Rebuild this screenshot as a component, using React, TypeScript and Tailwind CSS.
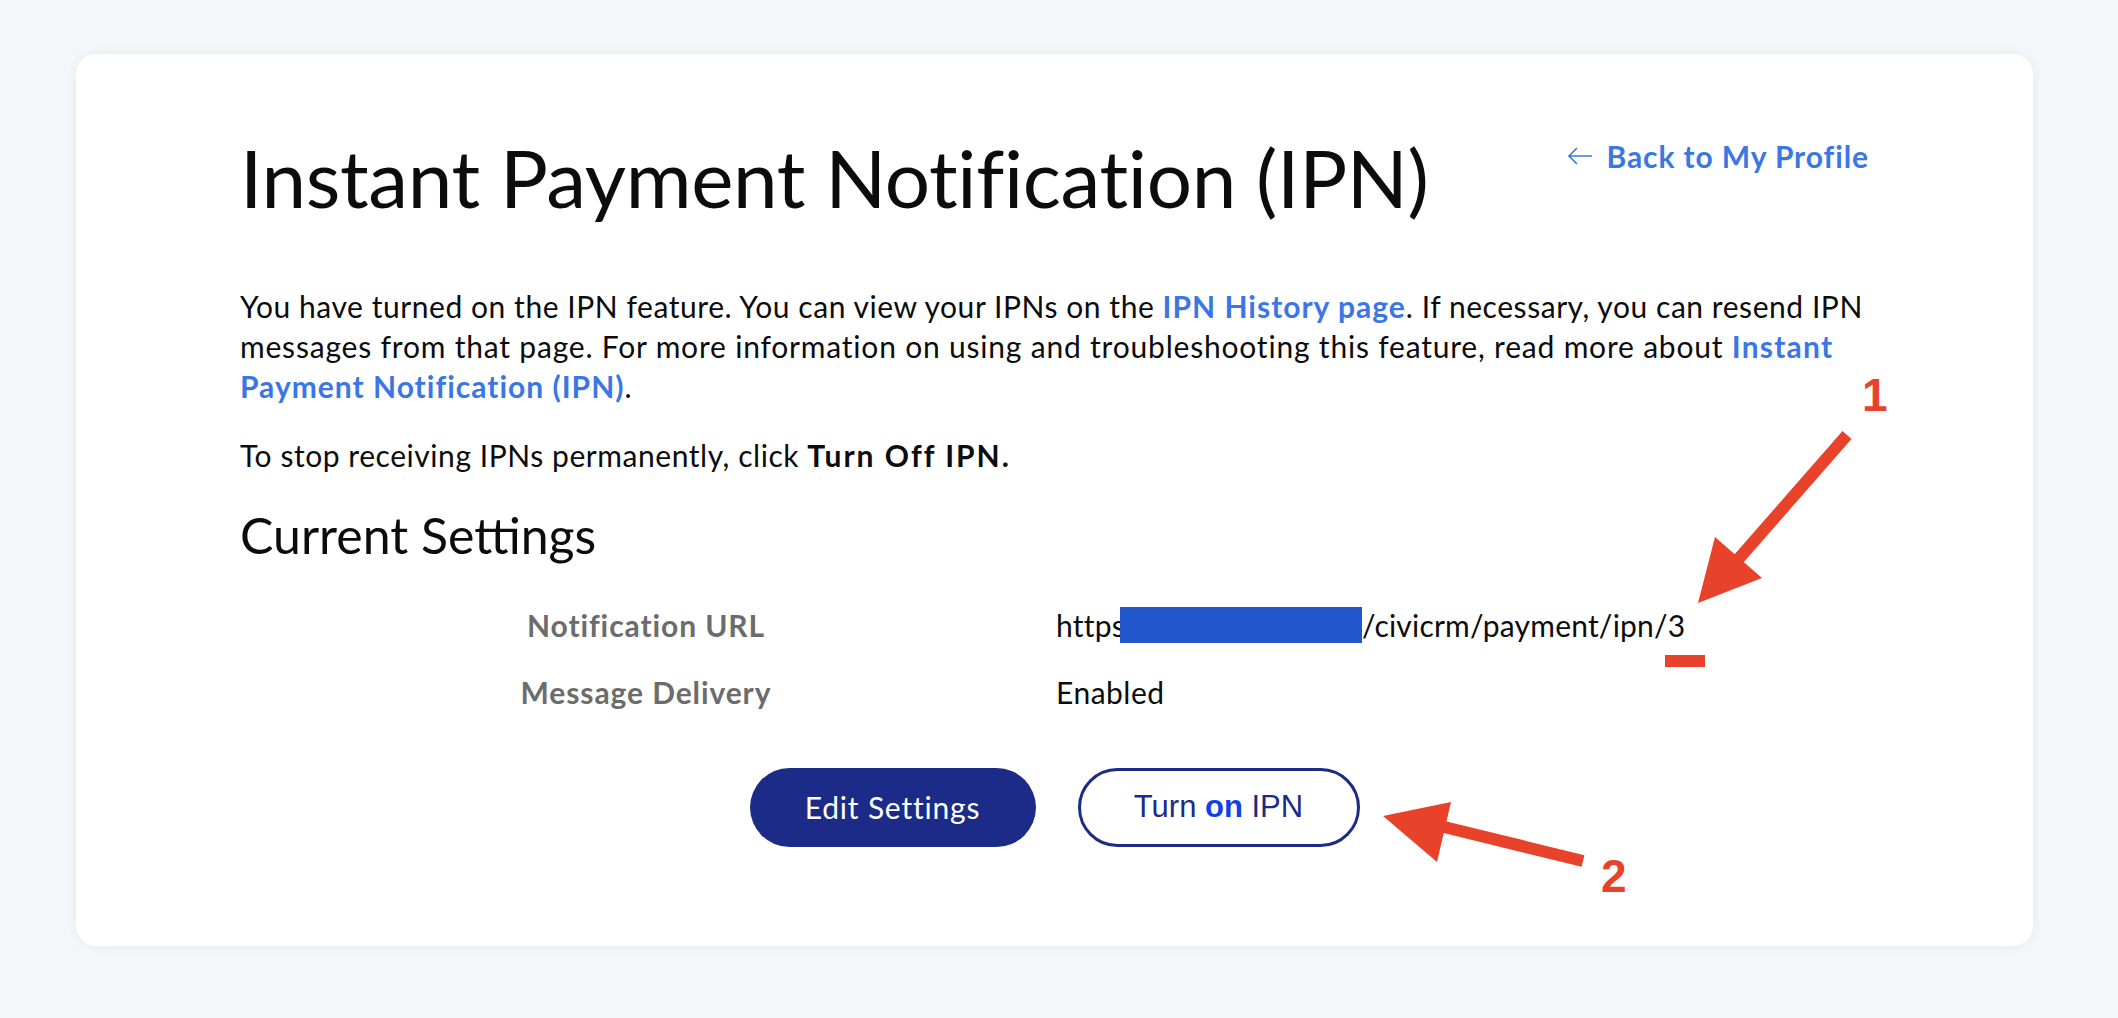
import React from "react";

const font = { fontFamily: "Lato, 'Noto Sans', sans-serif" };
const arial = { fontFamily: "'Liberation Sans', Arial, sans-serif" };

function Annotations() {
  return (
    <svg
      className="absolute left-0 top-0 pointer-events-none"
      width="2118"
      height="1018"
      viewBox="0 0 2118 1018"
    >
      <line x1="1847" y1="435" x2="1735" y2="563" stroke="#e8432a" strokeWidth="12" />
      <polygon points="1698,603 1715,537 1762,578" fill="#e8432a" />
      <line x1="1583" y1="861" x2="1440" y2="826" stroke="#e8432a" strokeWidth="12" />
      <polygon points="1383,816 1451,802 1437,862" fill="#e8432a" />
      <rect x="1665" y="655" width="40" height="12" fill="#e8432a" />
    </svg>
  );
}

export default function App() {
  return (
    <div className="relative min-h-[1018px] w-full bg-[#f5f6fa] pt-[54px] pl-[76px] pr-[85px] pb-[72px]" style={font}>
      <div className="bg-white rounded-[20px] shadow-[0_0_12px_rgba(0,0,0,0.06)] h-[892px] px-[164px] pt-[75px]">
        <div className="flex justify-between items-start">
          <h1 className="text-[80px] leading-[96px] text-[#0c0c0d] font-normal tracking-[-0.35px]">
            Instant Payment Notification (IPN)
          </h1>
          <a className="flex items-center gap-[14px] mt-[7px] text-[#3b77e4] font-bold text-[30px] leading-[40px] tracking-[0.9px]">
            <svg width="26" height="20" viewBox="0 0 26 20" fill="none" stroke="#3b77e4" strokeWidth="1.6">
              <path d="M25 10H2M10 2L2 10L10 18" />
            </svg>
            Back to My Profile
          </a>
        </div>
        <div className="mt-[61px] text-[30px] leading-[40px] text-[#0c0c0d] tracking-[0.55px]">
          <p>
            You have turned on the IPN feature. You can view your IPNs on the{" "}
            <span className="text-[#3b77e4] font-bold tracking-[1px]">IPN History page</span>. If necessary, you can resend IPN
            <br />
            <span className="tracking-[0.8px]">
              messages from that page. For more information on using and troubleshooting this feature, read more about{" "}
            </span>
            <span className="text-[#3b77e4] font-bold tracking-[1.2px]">Instant</span>
            <br />
            <span className="text-[#3b77e4] font-bold tracking-[1px]">Payment Notification (IPN)</span>.
          </p>
          <p className="mt-[29px]">
            To stop receiving IPNs permanently, click <span className="font-bold tracking-[2px]">Turn Off IPN.</span>
          </p>
        </div>
        <h2 className="mt-[30px] text-[50px] leading-[60px] text-[#0c0c0d] font-normal">Current Settings</h2>
        <div className="mt-[26px] text-[30px] leading-[40px]">
          <div className="flex h-[67px] items-center">
            <div className="w-[452px] ml-[180px] text-center font-bold text-[#6c6c6c] tracking-[0.9px]">Notification URL</div>
            <div className="ml-[184px] flex items-center text-[#0c0c0d] tracking-[0.2px]">
              <span className="w-[64px] whitespace-nowrap">https</span>
              <span className="relative inline-block w-[242px] h-[36px] bg-[#2457cd] mt-[1px]" />
              <span>/civicrm/payment/ipn/3</span>
            </div>
          </div>
          <div className="flex h-[67px] items-center">
            <div className="w-[452px] ml-[180px] text-center font-bold text-[#6c6c6c] tracking-[0.9px]">Message Delivery</div>
            <div className="ml-[184px] text-[#0c0c0d] tracking-[0.5px]">Enabled</div>
          </div>
        </div>
        <div className="mt-[43px] flex justify-center gap-[42px]">
          <button className="w-[286px] h-[79px] rounded-full bg-[#1c2b87] text-white text-[30px] tracking-[0.8px]">
            Edit Settings
          </button>
          <button
            className="w-[282px] h-[79px] rounded-full border-[3px] border-[#1c2b87] text-[#1c2b87] text-[31px]"
            style={arial}
          >
            Turn <span className="font-bold text-[#1040e8]">on</span> IPN
          </button>
        </div>
      </div>
      <div className="absolute left-[1862px] top-[372px] text-[46px] font-bold text-[#e8432a] leading-none" style={arial}>
        1
      </div>
      <div className="absolute left-[1601px] top-[853px] text-[46px] font-bold text-[#e8432a] leading-none" style={arial}>
        2
      </div>
      <Annotations />
    </div>
  );
}
